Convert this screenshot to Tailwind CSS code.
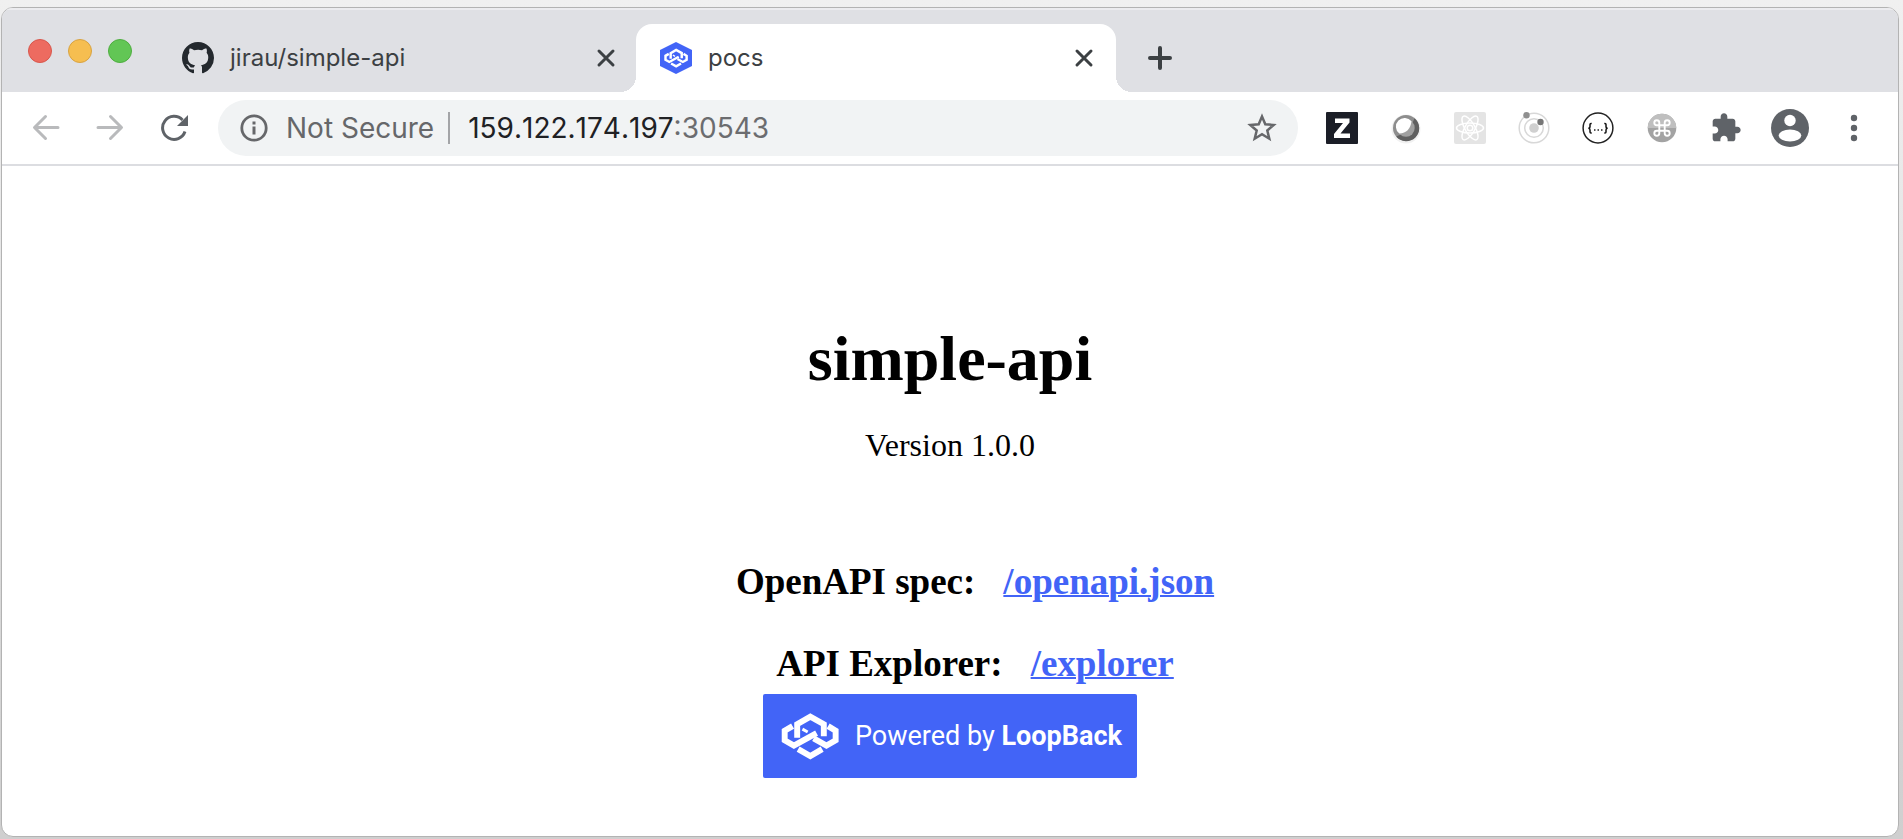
<!DOCTYPE html>
<html lang="en">
<head>
<meta charset="utf-8">
<title>pocs</title>
<script src="https://cdn.jsdelivr.net/npm/@tailwindcss/browser@4"></script>
</head>
<body class="flex min-h-screen flex-col bg-linear-to-b from-[#f0f0f0] to-[#cfcfcf] pt-[7px] pr-1 pb-[2px] pl-px font-['Inter','Liberation_Sans',sans-serif]">
<svg class="hidden" aria-hidden="true">
  <symbol id="loopback" viewBox="13 16 176 146">
    <g fill="none" stroke="currentColor" stroke-width="18">
      <path d="M62 94V53L102 30L143 53V90"/>
      <path d="M48 59L24 73V102L52 118L121 80"/>
      <path d="M156 59L179 73V102L151 118L112 96"/>
      <path d="M65 129L102 150L138 129"/>
      <path d="M78 68L94 77" stroke-width="9"/>
    </g>
  </symbol>
  <symbol id="close" viewBox="0 0 20 20"><path d="M3 3L17 17M17 3L3 17" fill="none" stroke="currentColor" stroke-width="3" stroke-linecap="round"/></symbol>
</svg>
<div class="flex flex-1 flex-col overflow-hidden rounded-xl border border-[#b3b3b3] bg-white">
  <header class="flex h-[84px] items-end bg-[#dfe0e4] shadow-[inset_0_2px_0_#ececef]">
    <div class="flex gap-4 self-start pt-[31px] pl-[26px]">
      <button aria-label="Close window" class="size-6 rounded-full border border-[#d8574c] bg-[#ed6b60]"></button>
      <button aria-label="Minimize window" class="size-6 rounded-full border border-[#d8a342] bg-[#f6be50]"></button>
      <button aria-label="Zoom window" class="size-6 rounded-full border border-[#4fae40] bg-[#62c655]"></button>
    </div>
    <div class="ml-[26px] flex h-[68px] w-[478px] items-center pr-5 pl-6 text-2xl text-[#3c4043]">
      <svg class="size-8 shrink-0" viewBox="0 0 16 16" fill="#24292e"><path d="M8 0C3.58 0 0 3.58 0 8c0 3.54 2.29 6.53 5.47 7.59.4.07.55-.17.55-.38 0-.19-.01-.82-.01-1.49-2.01.37-2.53-.49-2.69-.94-.09-.23-.48-.94-.82-1.13-.28-.15-.68-.52-.01-.53.63-.01 1.08.58 1.23.82.72 1.21 1.87.87 2.33.66.07-.52.28-.87.51-1.07-1.78-.2-3.64-.89-3.64-3.95 0-.87.31-1.59.82-2.15-.08-.2-.36-1.02.08-2.12 0 0 .67-.21 2.2.82.64-.18 1.32-.27 2-.27s1.36.09 2 .27c1.53-1.04 2.2-.82 2.2-.82.44 1.1.16 1.92.08 2.12.51.56.82 1.27.82 2.15 0 3.07-1.87 3.75-3.65 3.95.29.25.54.73.54 1.48 0 1.07-.01 1.93-.01 2.2 0 .21.15.46.55.38A8.01 8.01 0 0 0 16 8c0-4.42-3.58-8-8-8z"/></svg>
      <span class="ml-4 flex-1">jirau/simple-api</span>
      <button aria-label="Close tab"><svg class="size-5"><use href="#close"/></svg></button>
    </div>
    <div class="relative flex h-[68px] w-[480px] items-center rounded-t-2xl bg-white pr-[22px] pl-6 text-2xl text-[#3c4043]">
      <span class="absolute bottom-0 -left-4 size-4 bg-[radial-gradient(circle_at_0_0,transparent_16px,#fff_16px)]"></span>
      <span class="absolute -right-4 bottom-0 size-4 bg-[radial-gradient(circle_at_100%_0,transparent_16px,#fff_16px)]"></span>
      <svg class="size-8 shrink-0 text-white" viewBox="0 0 32 32"><path d="M16 0L32 8V24L16 32L0 24V8Z" fill="#4264f7"/><use href="#loopback" x="4" y="6" width="24" height="20"/></svg>
      <span class="ml-4 flex-1">pocs</span>
      <button aria-label="Close tab"><svg class="size-5"><use href="#close"/></svg></button>
    </div>
    <button aria-label="New tab" class="ml-8 flex h-[68px] items-center"><svg class="size-6" viewBox="0 0 24 24"><path d="M12 2V22M2 12H22" stroke="#3c4043" stroke-width="4" stroke-linecap="round"/></svg></button>
  </header>

  <nav class="flex h-[74px] items-center border-b-2 border-[#dcdde1] px-3 text-[#5f6368]">
    <button aria-label="Back" class="flex w-16 justify-center"><svg class="size-7" viewBox="0 0 28 28" fill="none" stroke="#b9babc" stroke-width="3" stroke-linecap="round" stroke-linejoin="round"><path d="M26 13.500H3M13.500 2.500L2.500 13.500L13.500 24.500"/></svg></button>
    <button aria-label="Forward" class="flex w-16 justify-center"><svg class="size-7" viewBox="0 0 28 28" fill="none" stroke="#b9babc" stroke-width="3" stroke-linecap="round" stroke-linejoin="round"><path d="M2 13.500H25M14.500 2.500L25.500 13.500L14.500 24.500"/></svg></button>
    <button aria-label="Reload" class="flex w-16 justify-center"><svg class="size-7" viewBox="0 0 28 28"><path d="M25 17.500A11.500 11.500 0 1 1 22.500 6" fill="none" stroke="currentColor" stroke-width="3"/><path d="M28 1V12H17Z" fill="currentColor"/></svg></button>
    <div class="mx-3 flex h-14 min-w-0 flex-1 items-center rounded-full bg-[#f1f3f4] pr-5 pl-[22px] text-[28px]">
      <svg class="size-7 shrink-0" viewBox="0 0 28 28"><circle cx="14" cy="14" r="12.200" fill="none" stroke="#66676a" stroke-width="2.800"/><path d="M14 7.500V10.500M14 12.500V20.500" stroke="#66676a" stroke-width="3"/></svg>
      <span class="ml-[18px] whitespace-nowrap text-[#66676a]">Not Secure</span>
      <span class="ml-[14px] h-8 w-0.5 bg-[#a3a4a7]"></span>
      <div role="textbox" contenteditable="true" aria-label="Address" class="ml-[18px] flex-1 whitespace-nowrap text-[#202124] [font-kerning:none]">159.122.174.197<span class="text-[#6b6c6f]">:30543</span></div>
      <button aria-label="Bookmark"><svg class="size-8" viewBox="0 0 32 32"><path d="M16 4.500L19.300 12.300L27.700 13L21.300 18.500L23.300 26.700L16 22.300L8.700 26.700L10.700 18.500L4.300 13L12.700 12.300Z" fill="none" stroke="#66676a" stroke-width="2.500"/></svg></button>
    </div>
    <button aria-label="Z extension" class="flex w-16 justify-center"><svg class="size-8" viewBox="0 0 32 32"><rect width="32" height="32" rx="1" fill="#1b1e27"/><path d="M9 6.500H23.500V10.500L14.500 21.500H24V26H8V22L17 11H9Z" fill="#fff"/></svg></button>
    <button aria-label="Sphere extension" class="flex w-16 justify-center"><svg class="size-8" viewBox="0 0 32 32"><circle cx="16" cy="17" r="14.500" fill="#f1f1f1"/><circle cx="16" cy="16" r="13" fill="#8e8e8e"/><path d="M24.500 6.200A13 13 0 1 1 6.200 24.500L12 22L22 12Z" fill="#606060"/><circle cx="16" cy="16" r="8.700" fill="#a0a0a0"/><path d="M21.500 9.300A8.700 8.700 0 1 0 9.300 21.500Q20 21 21.500 9.300Z" fill="#fff"/></svg></button>
    <button aria-label="React extension" class="flex w-16 justify-center"><svg class="size-8" viewBox="0 0 32 32"><rect width="32" height="32" rx="2" fill="#e4e4e4"/><g fill="none" stroke="#fff" stroke-width="1.500"><ellipse cx="16" cy="16" rx="13.500" ry="5"/><ellipse cx="16" cy="16" rx="13.500" ry="5" transform="rotate(60 16 16)"/><ellipse cx="16" cy="16" rx="13.500" ry="5" transform="rotate(120 16 16)"/></g><circle cx="16" cy="16" r="2.800" fill="#e4e4e4" stroke="#fff" stroke-width="1.500"/></svg></button>
    <button aria-label="Orbit extension" class="flex w-16 justify-center"><svg class="size-8" viewBox="0 0 32 32"><g fill="none" stroke="#d8d8d8" stroke-width="1.500"><circle cx="16" cy="16" r="14.800"/><circle cx="16" cy="16" r="9.300"/></g><circle cx="16" cy="16" r="4.800" fill="#d0d0d0"/><circle cx="8.500" cy="3.200" r="3.200" fill="#8f8f8f"/><circle cx="22.500" cy="10" r="3.200" fill="#777"/></svg></button>
    <button aria-label="JSON extension" class="flex w-16 justify-center"><svg class="size-8" viewBox="0 0 32 32"><circle cx="16" cy="16" r="14.900" fill="#fff" stroke="#222" stroke-width="1.500"/><g fill="none" stroke="#111" stroke-width="1.500"><path d="M9.700 11.500H9Q8 11.500 8 12.500V14.500Q8 16.300 6.300 16.300Q8 16.300 8 18V20Q8 21 9 21H9.700"/><path d="M22.300 11.500H23Q24 11.500 24 12.500V14.500Q24 16.300 25.700 16.300Q24 16.300 24 18V20Q24 21 23 21H22.300"/></g><path d="M12 18h1.500M15.500 18h1.500M19 18h1.500" stroke="#222" stroke-width="1.500"/></svg></button>
    <button aria-label="Shortcut extension" class="flex w-16 justify-center"><svg class="size-8" viewBox="0 0 32 32"><circle cx="16" cy="16" r="14.300" fill="#a3a3a3"/><path d="M1.700 16A14.300 14.300 0 0 1 30.300 16Z" fill="#bfbfbf"/><path d="M13.300 13.300V10.800A2.500 2.500 0 1 0 10.800 13.300H21.200A2.500 2.500 0 1 0 18.700 10.800V21.200A2.500 2.500 0 1 0 21.200 18.700H10.800A2.500 2.500 0 1 0 13.300 21.200Z" fill="none" stroke="#fff" stroke-width="1.900"/></svg></button>
    <button aria-label="Extensions" class="flex w-16 justify-center"><svg class="size-8" viewBox="0 0 24 24" fill="currentColor"><path d="M20.500 11H19V7c0-1.100-.9-2-2-2h-4V3.500C13 2.120 11.880 1 10.500 1S8 2.120 8 3.500V5H4c-1.100 0-1.990.9-1.990 2v3.800H3.500c1.490 0 2.700 1.210 2.700 2.700s-1.210 2.700-2.700 2.700H2V20c0 1.100.9 2 2 2h3.800v-1.500c0-1.490 1.210-2.700 2.700-2.700 1.490 0 2.700 1.210 2.700 2.700V22H17c1.100 0 2-.9 2-2v-4h1.500c1.380 0 2.500-1.120 2.500-2.500S21.880 11 20.500 11z"/></svg></button>
    <button aria-label="Profile" class="flex w-16 justify-center"><svg class="size-[38px]" viewBox="0 0 38 38"><circle cx="19" cy="19" r="19" fill="currentColor"/><circle cx="19" cy="11.500" r="5.700" fill="#fff"/><ellipse cx="19" cy="26.500" rx="11.300" ry="6" fill="#fff"/></svg></button>
    <button aria-label="Menu" class="flex w-16 justify-center"><svg class="size-8" viewBox="0 0 32 32" fill="currentColor"><circle cx="16" cy="6" r="3.200"/><circle cx="16" cy="16" r="3.200"/><circle cx="16" cy="26" r="3.200"/></svg></button>
  </nav>

  <main class="flex flex-col items-center pt-[157px] font-['Liberation_Serif',serif] text-black">
    <h1 class="text-[64px] leading-[72px] font-bold">simple-api</h1>
    <p class="mt-8 text-[32px] leading-9">Version 1.0.0</p>
    <div class="mt-[98px] flex flex-col items-center gap-10 pl-[50px] text-[37px] leading-[42px] font-bold">
      <h3 class="flex gap-7">OpenAPI spec: <a href="/openapi.json" class="text-[#4264f7] underline decoration-2">/openapi.json</a></h3>
      <h3 class="flex gap-7">API Explorer: <a href="/explorer" class="text-[#4264f7] underline decoration-2">/explorer</a></h3>
    </div>
    <a href="https://loopback.io" class="mt-[9px] flex h-[84px] w-[374px] items-center rounded-xs bg-[#4264f7] pl-[18px] font-['Roboto',sans-serif] text-[27px] whitespace-nowrap text-white">
      <svg class="h-12 w-[58px]"><use href="#loopback"/></svg>
      <span class="ml-4">Powered by <b>LoopBack</b></span>
    </a>
  </main>
</div>
</body>
</html>
